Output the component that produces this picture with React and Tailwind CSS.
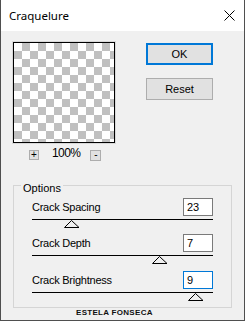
import React from 'react';

const sans = { fontFamily: '"Liberation Sans", Arial, sans-serif' };

const Thumb = ({ left }) => (
  <svg
    width="16"
    height="8"
    viewBox="0 0 16 8"
    className="absolute top-[1px]"
    style={{ left }}
  >
    <polygon points="7.5,0.5 15,7.5 0.5,7.5" fill="none" stroke="#000" strokeWidth="1" />
  </svg>
);

const SliderRow = ({ label, value, thumb, focused, className = '' }) => (
  <div className={`flex flex-col ${className}`}>
    <div className="flex items-center justify-between">
      <span className="text-[11px] leading-[13px] tracking-[-0.25px] text-black">{label}</span>
      <div
        className={`w-[30px] h-[18px] bg-white border flex items-center pl-[3px] text-[11px] text-black ${
          focused ? 'border-[#0078d7]' : 'border-[#7a7a7a]'
        }`}
      >
        {value}
      </div>
    </div>
    <div className="relative mt-[3px] h-[9px]">
      <div className="h-px bg-black" />
      <Thumb left={thumb} />
    </div>
  </div>
);

const App = () => {
  return (
    <div
      className="w-[245px] h-[321px] flex flex-col border-x border-b border-[#4f4f4f] bg-[#f0f0f0] overflow-hidden"
      style={sans}
    >
      {/* title bar */}
      <div className="h-[31px] shrink-0 bg-white flex items-center justify-between pl-[8px] pr-[9px]">
        <span
          className="text-[11.5px] text-black"
          style={{ fontFamily: '"Noto Sans", "Open Sans", sans-serif' }}
        >
          Craquelure
        </span>
        <svg width="11" height="11" viewBox="0 0 11 11">
          <path d="M0.5 0.5 L10.5 10.5 M10.5 0.5 L0.5 10.5" stroke="#000" strokeWidth="1" />
        </svg>
      </div>

      {/* body */}
      <div className="flex-1 flex flex-col pl-[11px] pt-[10px]">
        <div className="flex">
          <div className="flex flex-col w-[104px]">
            <div className="border border-[#d9d9d9]">
              <div className="w-[102px] h-[101px] border border-black bg-[image:repeating-conic-gradient(#c0c0c0_0_25%,#ffffff_0_50%)] bg-[length:16px_16px]" />
            </div>
            <div className="flex items-center h-[12px] mt-[5px] pl-[17px]">
              <div className="w-[10px] h-[10px] bg-[#e1e1e1] border border-[#adadad] flex items-center justify-center text-[10px] leading-none text-black">
                +
              </div>
              <span className="ml-[13px] text-[12px] leading-[12px] tracking-[-0.6px] text-black -mt-[5px]">
                100%
              </span>
              <div className="ml-[10px] w-[11px] h-[11px] bg-[#e1e1e1] border border-[#adadad] flex items-center justify-center text-[10px] leading-none text-black">
                -
              </div>
            </div>
          </div>

          <div className="ml-[30px] mt-[2px] flex flex-col">
            <div className="w-[67px] h-[22px] bg-[#e1e1e1] border-2 border-[#0078d7] flex items-center justify-center text-[11px] text-black">
              OK
            </div>
            <div className="mt-[13px] w-[67px] h-[22px] bg-[#e1e1e1] border border-[#adadad] flex items-center justify-center text-[11px] text-black">
              Reset
            </div>
          </div>
        </div>

        {/* options group */}
        <div className="relative mt-[24px] ml-[1px] w-[219px] border border-[#d5d5d5] pt-[12px] pb-[6px] pl-[18px] pr-[18px]">
          <span className="absolute -top-[4px] left-[7px] px-[2px] bg-[#f0f0f0] text-[11px] leading-[13px] text-black">
            Options
          </span>
          <SliderRow label="Crack Spacing" value="23" thumb={32} />
          <SliderRow label="Crack Depth" value="7" thumb={120} className="mt-[6px]" />
          <SliderRow label="Crack Brightness" value="9" thumb={156} focused className="mt-[7px]" />
        </div>

        <div className="ml-[64px] mt-[1px] text-[8px] leading-[8px] font-bold tracking-[0.3px] text-[#111]">
          ESTELA FONSECA
        </div>
      </div>
    </div>
  );
};

export default App;
